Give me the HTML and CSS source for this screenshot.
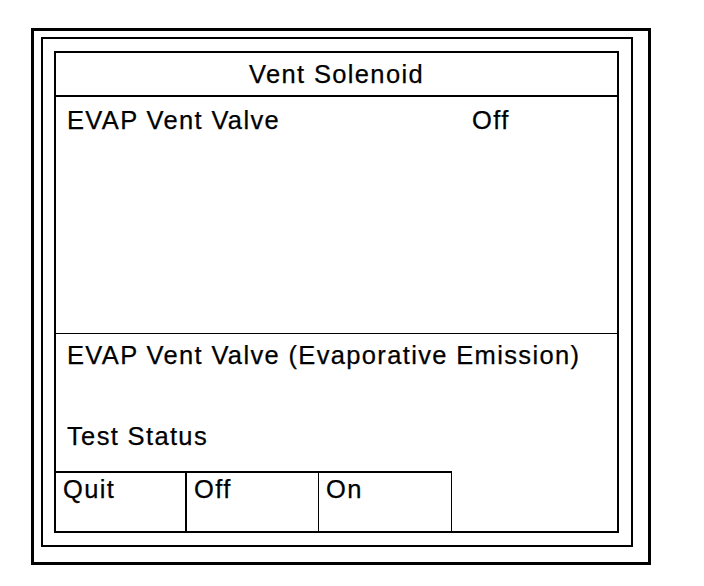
FILE: index.html
```html
<!DOCTYPE html>
<html>
<head>
<meta charset="utf-8">
<link rel="stylesheet" href="styles.css">
</head>
<body>
<div class="outer">
  <div class="middle">
    <div class="screen">
      <div class="title">Vent Solenoid</div>
      <div class="data">
        <div class="row">
          <span class="label">EVAP Vent Valve</span>
          <span class="value">Off</span>
        </div>
      </div>
      <div class="info">
        <div class="info-line">EVAP Vent Valve (Evaporative Emission)</div>
        <div class="info-line status">Test Status</div>
      </div>
      <div class="buttons">
        <div class="btn">Quit</div>
        <div class="btn">Off</div>
        <div class="btn">On</div>
      </div>
    </div>
  </div>
</div>
</body>
</html>
```
FILE: styles.css
```css
* { box-sizing: border-box; }
html, body { margin: 0; padding: 0; background: #fff; }
body {
  font-family: "Liberation Sans", Arial, sans-serif;
  font-size: 25.5px;
  letter-spacing: 1.35px;
  color: #000;
  -webkit-text-stroke: 0.25px #000;
  padding: 28px 0 0 31px;
}
.outer {
  width: 620px;
  height: 537px;
  border: 3px solid #000;
  padding: 6px 14px 15px 7px;
}
.middle {
  width: 592px;
  height: 510px;
  border: 2px solid #000;
  padding: 12px 12px 12px 11px;
}
.screen {
  width: 565px;
  height: 482px;
  border: 2px solid #000;
  display: flex;
  flex-direction: column;
}
.title {
  height: 44px;
  border-bottom: 2px solid #000;
  text-align: center;
  line-height: 41px;
  padding-top: 1px;
}
.data {
  height: 236px;
  padding: 9px 0 0 11px;
}
.row {
  display: grid;
  grid-template-columns: 405px 1fr;
  line-height: 28px;
}
.info {
  height: 138px;
  border-top: 1px solid #000;
  padding: 7px 0 0 11px;
  display: flex;
  flex-direction: column;
  gap: 53px;
}
.info-line { line-height: 28px; }
.buttons {
  flex: 1;
  display: flex;
}
.btn {
  width: 132px;
  border-top: 2px solid #000;
  border-right: 1px solid #000;
  padding: 2px 0 0 7px;
  line-height: 28px;
}
.btn:first-child { width: 131px; border-right-width: 2px; }
.btn:last-child { width: 133px; }
```
